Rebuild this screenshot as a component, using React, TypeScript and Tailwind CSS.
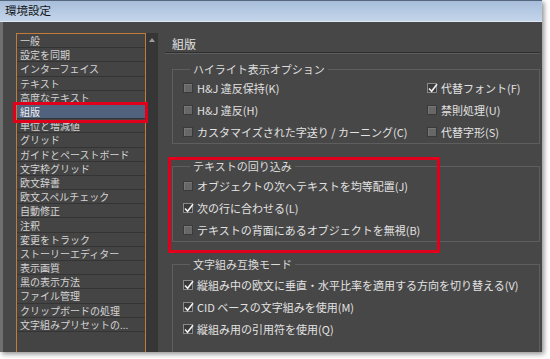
const font = { fontFamily: '"Noto Sans CJK JP", "Noto Sans", sans-serif' }

const MENU_ITEMS = [
  '一般',
  '設定を同期',
  'インターフェイス',
  'テキスト',
  '高度なテキスト',
  '組版',
  '単位と増減値',
  'グリッド',
  'ガイドとペーストボード',
  '文字枠グリッド',
  '欧文辞書',
  '欧文スペルチェック',
  '自動修正',
  '注釈',
  '変更をトラック',
  'ストーリーエディター',
  '表示画質',
  '黒の表示方法',
  'ファイル管理',
  'クリップボードの処理',
  '文字組みプリセットの...',
]

function CheckBox({ checked }: { checked: boolean }) {
  if (checked) {
    return (
      <span className="relative inline-block h-[10px] w-[10px] shrink-0 border border-[#8a8a8a] bg-[#3a3a3a]">
        <svg
          className="absolute -left-[1px] -top-[2px]"
          width="12"
          height="12"
          viewBox="0 0 12 12"
        >
          <path
            d="M2 6.5 L4.6 9.2 L10 2.2"
            fill="none"
            stroke="#f2f2f2"
            strokeWidth="1.6"
          />
        </svg>
      </span>
    )
  }
  return (
    <span className="inline-block h-[10px] w-[10px] shrink-0 border border-[#3a3a3a] bg-[#676767] shadow-[inset_1px_1px_0_#777]" />
  )
}

function Option({ label, checked = false }: { label: string; checked?: boolean }) {
  return (
    <div className="flex h-[22px] items-center gap-[4px] whitespace-nowrap text-[11px] text-[#e2e2e2]">
      <CheckBox checked={checked} />
      <span>{label}</span>
    </div>
  )
}

function Group({
  title,
  className,
  children,
}: {
  title: string
  className: string
  children: React.ReactNode
}) {
  return (
    <fieldset className={`ml-[14px] mr-[2px] border border-[#5e5e5e] pl-[10px] ${className}`}>
      <legend className="ml-[7px] px-[3px] text-[11px] leading-[14px] text-[#dcdcdc]">
        {title}
      </legend>
      {children}
    </fieldset>
  )
}

export default function App() {
  return (
    <div className="h-[359px] w-[550px] overflow-hidden bg-white" style={font}>
      <div className="relative flex h-[352px] w-[542px] flex-col shadow-[2px_2px_5px_rgba(0,0,0,0.45)]">
        {/* title bar */}
        <div className="flex h-[22px] items-center border-t border-[#56677d] border-b border-b-[#dfe8f3] bg-gradient-to-b from-[#a7bedb] to-[#c4d5ea] pl-[5px] text-[11.5px] text-[#151515]">
          環境設定
        </div>

        <div className="flex min-h-0 flex-1 overflow-hidden border-l-[3px] border-[#707070] bg-[#474747]">
          {/* left menu */}
          <div className="flex shrink-0 pl-[13px] pt-[11px]">
            <div className="w-[130px] border-x border-t border-[#c27c38] bg-[#444444]">
              {MENU_ITEMS.map((item) => (
                <div
                  key={item}
                  className={`flex h-[14.2px] items-center whitespace-nowrap border-b border-[#343434] pl-[3px] text-[10px] leading-[13px] ${
                    item === '組版' ? 'bg-[#51627e] text-[#f0f0f0]' : 'text-[#d4d4d4]'
                  }`}
                >
                  {item}
                </div>
              ))}
            </div>
            <div className="flex w-[12px] justify-center bg-[#363636] pt-[5px]">
              <svg width="6" height="4" viewBox="0 0 6 4">
                <path d="M3 0 L6 4 L0 4 Z" fill="#9c9c9c" />
              </svg>
            </div>
          </div>

          {/* right panel */}
          <div className="flex min-w-0 flex-1 flex-col pt-[14px]">
            <div className="h-[16px] pl-[14px] text-[12px] leading-[16px] text-[#e0e0e0]">組版</div>
            <div className="ml-[7px] mr-[2px] h-[2px] border-t border-[#2f2f2f] border-b border-b-[#5c5c5c]" />

            <Group title="ハイライト表示オプション" className="mt-[8px] h-[86px] pt-[1px]">
              <div className="grid grid-cols-[244px_1fr]">
                <Option label="H&J 違反保持(K)" />
                <Option label="代替フォント(F)" checked />
                <Option label="H&J 違反(H)" />
                <Option label="禁則処理(U)" />
                <Option label="カスタマイズされた字送り / カーニング(C)" />
                <Option label="代替字形(S)" />
              </div>
            </Group>

            <Group title="テキストの回り込み" className="mt-[15px] h-[86px] pt-[2px]">
              <Option label="オブジェクトの次へテキストを均等配置(J)" />
              <Option label="次の行に合わせる(L)" checked />
              <Option label="テキストの背面にあるオブジェクトを無視(B)" />
            </Group>

            <Group title="文字組み互換モード" className="mt-[15px] h-[120px] shrink-0 pt-[3px]">
              <Option label="縦組み中の欧文に垂直・水平比率を適用する方向を切り替える(V)" checked />
              <Option label="CID ベースの文字組みを使用(M)" checked />
              <Option label="縦組み用の引用符を使用(Q)" checked />
            </Group>
          </div>
        </div>

        {/* annotation highlights */}
        <div className="absolute left-[13px] top-[102px] h-[21px] w-[135px] border-[3px] border-[#e1001b]" />
        <div className="absolute left-[168px] top-[157px] h-[96px] w-[272px] border-[3px] border-[#e1001b]" />
      </div>
    </div>
  )
}
